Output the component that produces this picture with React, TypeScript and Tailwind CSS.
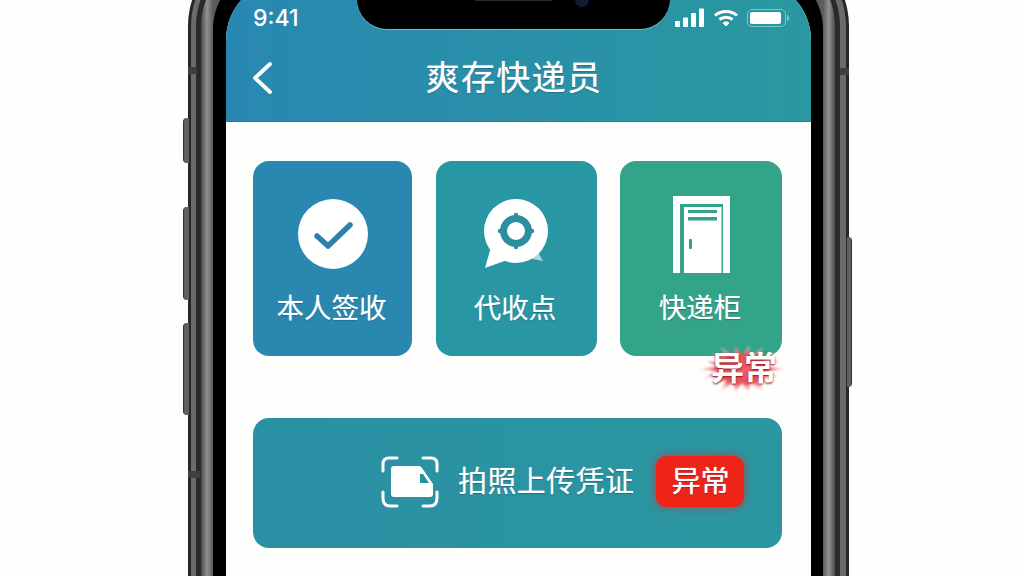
import type { ReactNode } from "react";

const cjk = "font-['Noto_Sans_CJK_SC','Noto_Sans',sans-serif]";

const SignalIcon = () => (
  <svg width="30" height="20" viewBox="0 0 30 20" fill="white">
    <rect x="0" y="13" width="5" height="6" rx="1" />
    <rect x="8" y="9.5" width="5" height="9.5" rx="1" />
    <rect x="16" y="5" width="5" height="14" rx="1" />
    <rect x="24" y="0.5" width="5" height="18.5" rx="1" />
  </svg>
);

const WifiIcon = () => (
  <svg width="26" height="20" viewBox="0 0 26 20" fill="none" stroke="white" strokeWidth="3">
    <path d="M2 7.5 C8 2 18 2 24 7.5" />
    <path d="M6.5 11.5 C10 8.5 16 8.5 19.5 11.5" />
    <path d="M10 15 L13 18 L16 15 C14.5 13.5 11.5 13.5 10 15 Z" fill="white" strokeWidth="1" />
  </svg>
);

const BatteryIcon = () => (
  <div className="flex items-center">
    <div className="w-[39px] h-[18px] rounded-[5px] border border-[#7fc4cc] p-[2px]">
      <div className="h-full w-[31px] rounded-[2px] bg-white" />
    </div>
    <div className="w-[2px] h-[6px] rounded-r-sm bg-[#7fc4cc] ml-[1px]" />
  </div>
);

const CheckIcon = () => (
  <svg width="70" height="70" viewBox="0 0 70 70">
    <circle cx="35" cy="35" r="35" fill="white" />
    <path d="M19 37 L30 47 L52 26" fill="none" stroke="#2b83ad" strokeWidth="5.5" strokeLinecap="round" strokeLinejoin="round" />
  </svg>
);

const PinBubbleIcon = () => (
  <svg width="64" height="70" viewBox="0 0 64 70">
    <path d="M52 50 L59 62 L44 59 Z" fill="#a9d6da" />
    <circle cx="32" cy="32" r="32" fill="white" />
    <path d="M7 48 L1 69 L26 60 Z" fill="white" />
    <circle cx="32" cy="32" r="12.5" fill="none" stroke="#2a8f9f" strokeWidth="7" />
    <circle cx="32" cy="16" r="2.2" fill="#2a8f9f" />
    <circle cx="32" cy="48" r="2.2" fill="#2a8f9f" />
    <circle cx="16" cy="32" r="2.2" fill="#2a8f9f" />
    <circle cx="48" cy="32" r="2.2" fill="#2a8f9f" />
  </svg>
);

const LockerIcon = () => (
  <svg width="57" height="77" viewBox="0 0 57 77">
    <path d="M0 0 H57 V77 H50 V8 H7 V77 H0 Z" fill="white" />
    <rect x="11" y="11" width="37.5" height="66" fill="white" />
    <rect x="15" y="14" width="29" height="3" fill="#33a388" />
    <rect x="15" y="21" width="29" height="3.5" fill="#33a388" />
    <rect x="16" y="43" width="3" height="10" rx="1" fill="#33a388" />
  </svg>
);

const ScanTruckIcon = () => (
  <svg width="58" height="52" viewBox="0 0 58 52" fill="none">
    <g stroke="white" strokeWidth="3" strokeLinecap="round">
      <path d="M16 2 H8 C4 2 2 4 2 8 V15" />
      <path d="M42 2 H50 C54 2 56 4 56 8 V15" />
      <path d="M2 36 V42 C2 47 4 50 9 50 H16" />
      <path d="M56 36 V42 C56 47 54 50 49 50 H42" />
    </g>
    <path d="M13 10 C11 10 10 11 10 13 V38 C10 40 11 41 13 41 H49 C51 41 52 40 52 38 V28 L41 12 C40 10.5 39 10 37 10 Z" fill="white" />
    <path d="M39 18 H42 L48 27 H39 Z" fill="#2a8f9f" />
  </svg>
);

// the ragged red glow behind the floating label
const burst = Array.from({ length: 36 }, (_, i) => {
  const a = (i / 36) * Math.PI * 2;
  const r = i % 2 === 0 ? 1 - (i % 3) * 0.06 : 0.55;
  return `${(44 + Math.cos(a) * 44 * r).toFixed(1)},${(26 + Math.sin(a) * 26 * r).toFixed(1)}`;
}).join(" ");

const GlowBurst = () => (
  <svg className="absolute left-[-13px] top-[-2px] blur-[1px]" width="88" height="52" viewBox="0 0 88 52">
    <defs>
      <radialGradient id="burst">
        <stop offset="0%" stopColor="#e8606a" />
        <stop offset="60%" stopColor="#e8505a" />
        <stop offset="100%" stopColor="#fbd3d5" stopOpacity="0.4" />
      </radialGradient>
    </defs>
    <polygon points={burst} fill="url(#burst)" />
  </svg>
);

interface TileProps {
  label: string;
  className: string;
  icon: ReactNode;
}

const Tile = ({ label, className, icon }: TileProps) => (
  <div className={`h-[195px] rounded-[16px] flex flex-col items-center pt-[37px] ${className}`}>
    <div className="h-[72px] flex items-center justify-center">{icon}</div>
    <p className="mt-[18px] pr-[2px] text-[27.5px] leading-[36px] text-white [text-shadow:0_0_1px_rgba(255,255,255,0.5),0_1px_1px_rgba(0,60,80,0.45)]">{label}</p>
  </div>
);

const bandGrey =
  "bg-[linear-gradient(90deg,#4a4a4b_0,#909192_6px,#5c5c5d_12px,#5c5c5d_calc(100%-12px),#909192_calc(100%-6px),#4a4a4b_100%)]";

export default function App() {
  return (
    <div className={`w-[1024px] h-[576px] overflow-hidden bg-[#fefefd] pl-[188px] ${cjk}`}>
      <div className="relative w-[661px] mt-[-58px]">
        {/* side buttons */}
        <div className="absolute left-[-5px] top-[176px] w-[6px] h-[45px] rounded-l-sm bg-[#5f6061] border-l border-[#333]" />
        <div className="absolute left-[-5px] top-[265px] w-[6px] h-[93px] rounded-l-sm bg-[#5f6061] border-l border-[#333]" />
        <div className="absolute left-[-5px] top-[381px] w-[6px] h-[92px] rounded-l-sm bg-[#5f6061] border-l border-[#333]" />
        <div className="absolute right-[-3px] top-[295px] w-[5px] h-[150px] rounded-r-sm bg-[#5f6061] border-r border-[#333]" />

        {/* metal frame, band by band */}
        <div className="rounded-t-[84px] bg-[#26272a] pl-[3px] pr-[3px] pt-[3px]">
          <div className="rounded-t-[81px] bg-[#6a6b6c] pl-[5px] pr-[6px] pt-[5px]">
            <div className="rounded-t-[76px] bg-[#2a2a2c] pl-[5px] pr-[5px] pt-[5px]">
              <div className={`rounded-t-[71px] pl-[12px] pr-[12px] pt-[12px] ${bandGrey}`}>
                <div className="rounded-t-[62px] bg-black pl-[13px] pr-[12px] pt-[13px]">
                  <div className="h-[640px] rounded-t-[60px] bg-[#fefefd] overflow-hidden flex flex-col">
                    <header className="relative h-[142px] shrink-0 bg-[linear-gradient(90deg,#2888b2,#2a98a0)] border-b border-[#1f7f93]">
                      <div className="absolute left-[131px] top-0 w-[313px] h-[49px] rounded-b-[30px] bg-black shadow-[0_1px_0_#6fb9c9]">
                        <div className="absolute left-[118px] top-[19px] w-[77px] h-[2px] bg-[#2c2c2c]" />
                        <div className="absolute left-[218px] top-[13px] w-[14px] h-[14px] rounded-full bg-[#141c33]" />
                      </div>
                      <div className="flex items-center justify-between h-[57px] pt-[19px] pl-[27px] pr-[22px]">
                        <span className="text-[23px] font-medium text-white font-['Inter',sans-serif]">9:41</span>
                        <div className="flex items-center gap-[8px]">
                          <SignalIcon />
                          <WifiIcon />
                          <BatteryIcon />
                        </div>
                      </div>
                      <div className="relative flex items-center justify-center h-[64px] mt-[7px] pr-[9px]">
                        <svg className="absolute left-[26px] top-[17px]" width="22" height="34" viewBox="0 0 22 34" fill="none" stroke="white" strokeWidth="3.8" strokeLinecap="round" strokeLinejoin="round">
                          <path d="M18 3 L3 17 L18 31" />
                        </svg>
                        <h1 className="text-[34px] text-white tracking-[1.4px] leading-none [text-shadow:0_0_1px_rgba(255,255,255,0.7),0_1px_1px_rgba(0,60,80,0.5)]">爽存快递员</h1>
                      </div>
                    </header>

                    <main className="pl-[27px] pr-[29px] pt-[39px]">
                      <div className="relative grid grid-cols-[159px_161px_1fr] gap-[23.5px]">
                        <Tile label="本人签收" className="bg-[#2987b0]" icon={<CheckIcon />} />
                        <Tile label="代收点" className="bg-[#2896a3]" icon={<PinBubbleIcon />} />
                        <Tile label="快递柜" className="bg-[#34a489]" icon={<LockerIcon />} />
                        <div className="absolute right-[5px] bottom-[-31px] w-[66px] h-[42px]">
                          <GlowBurst />
                          <span className="relative block text-[33px] leading-[42px] font-bold text-white [text-shadow:0_1px_2px_#8f0f18]">异常</span>
                        </div>
                      </div>

                      <div className="mt-[62px] h-[130px] rounded-[16px] bg-[linear-gradient(90deg,#2a90a5,#2a97a0)] flex items-center pl-[128px] pb-[3px]">
                        <ScanTruckIcon />
                        <span className="ml-[19px] pb-[3px] text-[29px] tracking-[0.4px] text-white [text-shadow:0_0_1px_rgba(255,255,255,0.5),0_1px_1px_rgba(0,60,80,0.5)]">拍照上传凭证</span>
                        <span className="ml-[22px] pb-[3px] w-[88px] h-[51px] rounded-[10px] bg-[#ee2418] shadow-[0_0_8px_#9c4a50] flex items-center justify-center text-[29px] text-white [text-shadow:0_0_1px_#fff,0_1px_1px_#8f0f18]">异常</span>
                      </div>
                    </main>
                  </div>
                </div>
              </div>
            </div>
          </div>
        </div>

        {/* antenna marks */}
        <div className="absolute left-[0px] top-[125px] w-[9px] h-[7px] bg-[#3e3f40]" />
        <div className="absolute right-[0px] top-[126px] w-[9px] h-[7px] bg-[#3e3f40]" />
        <div className="absolute left-[0px] top-[529px] w-[12px] h-[7px] bg-[#3e3f40]" />
      </div>
    </div>
  );
}
